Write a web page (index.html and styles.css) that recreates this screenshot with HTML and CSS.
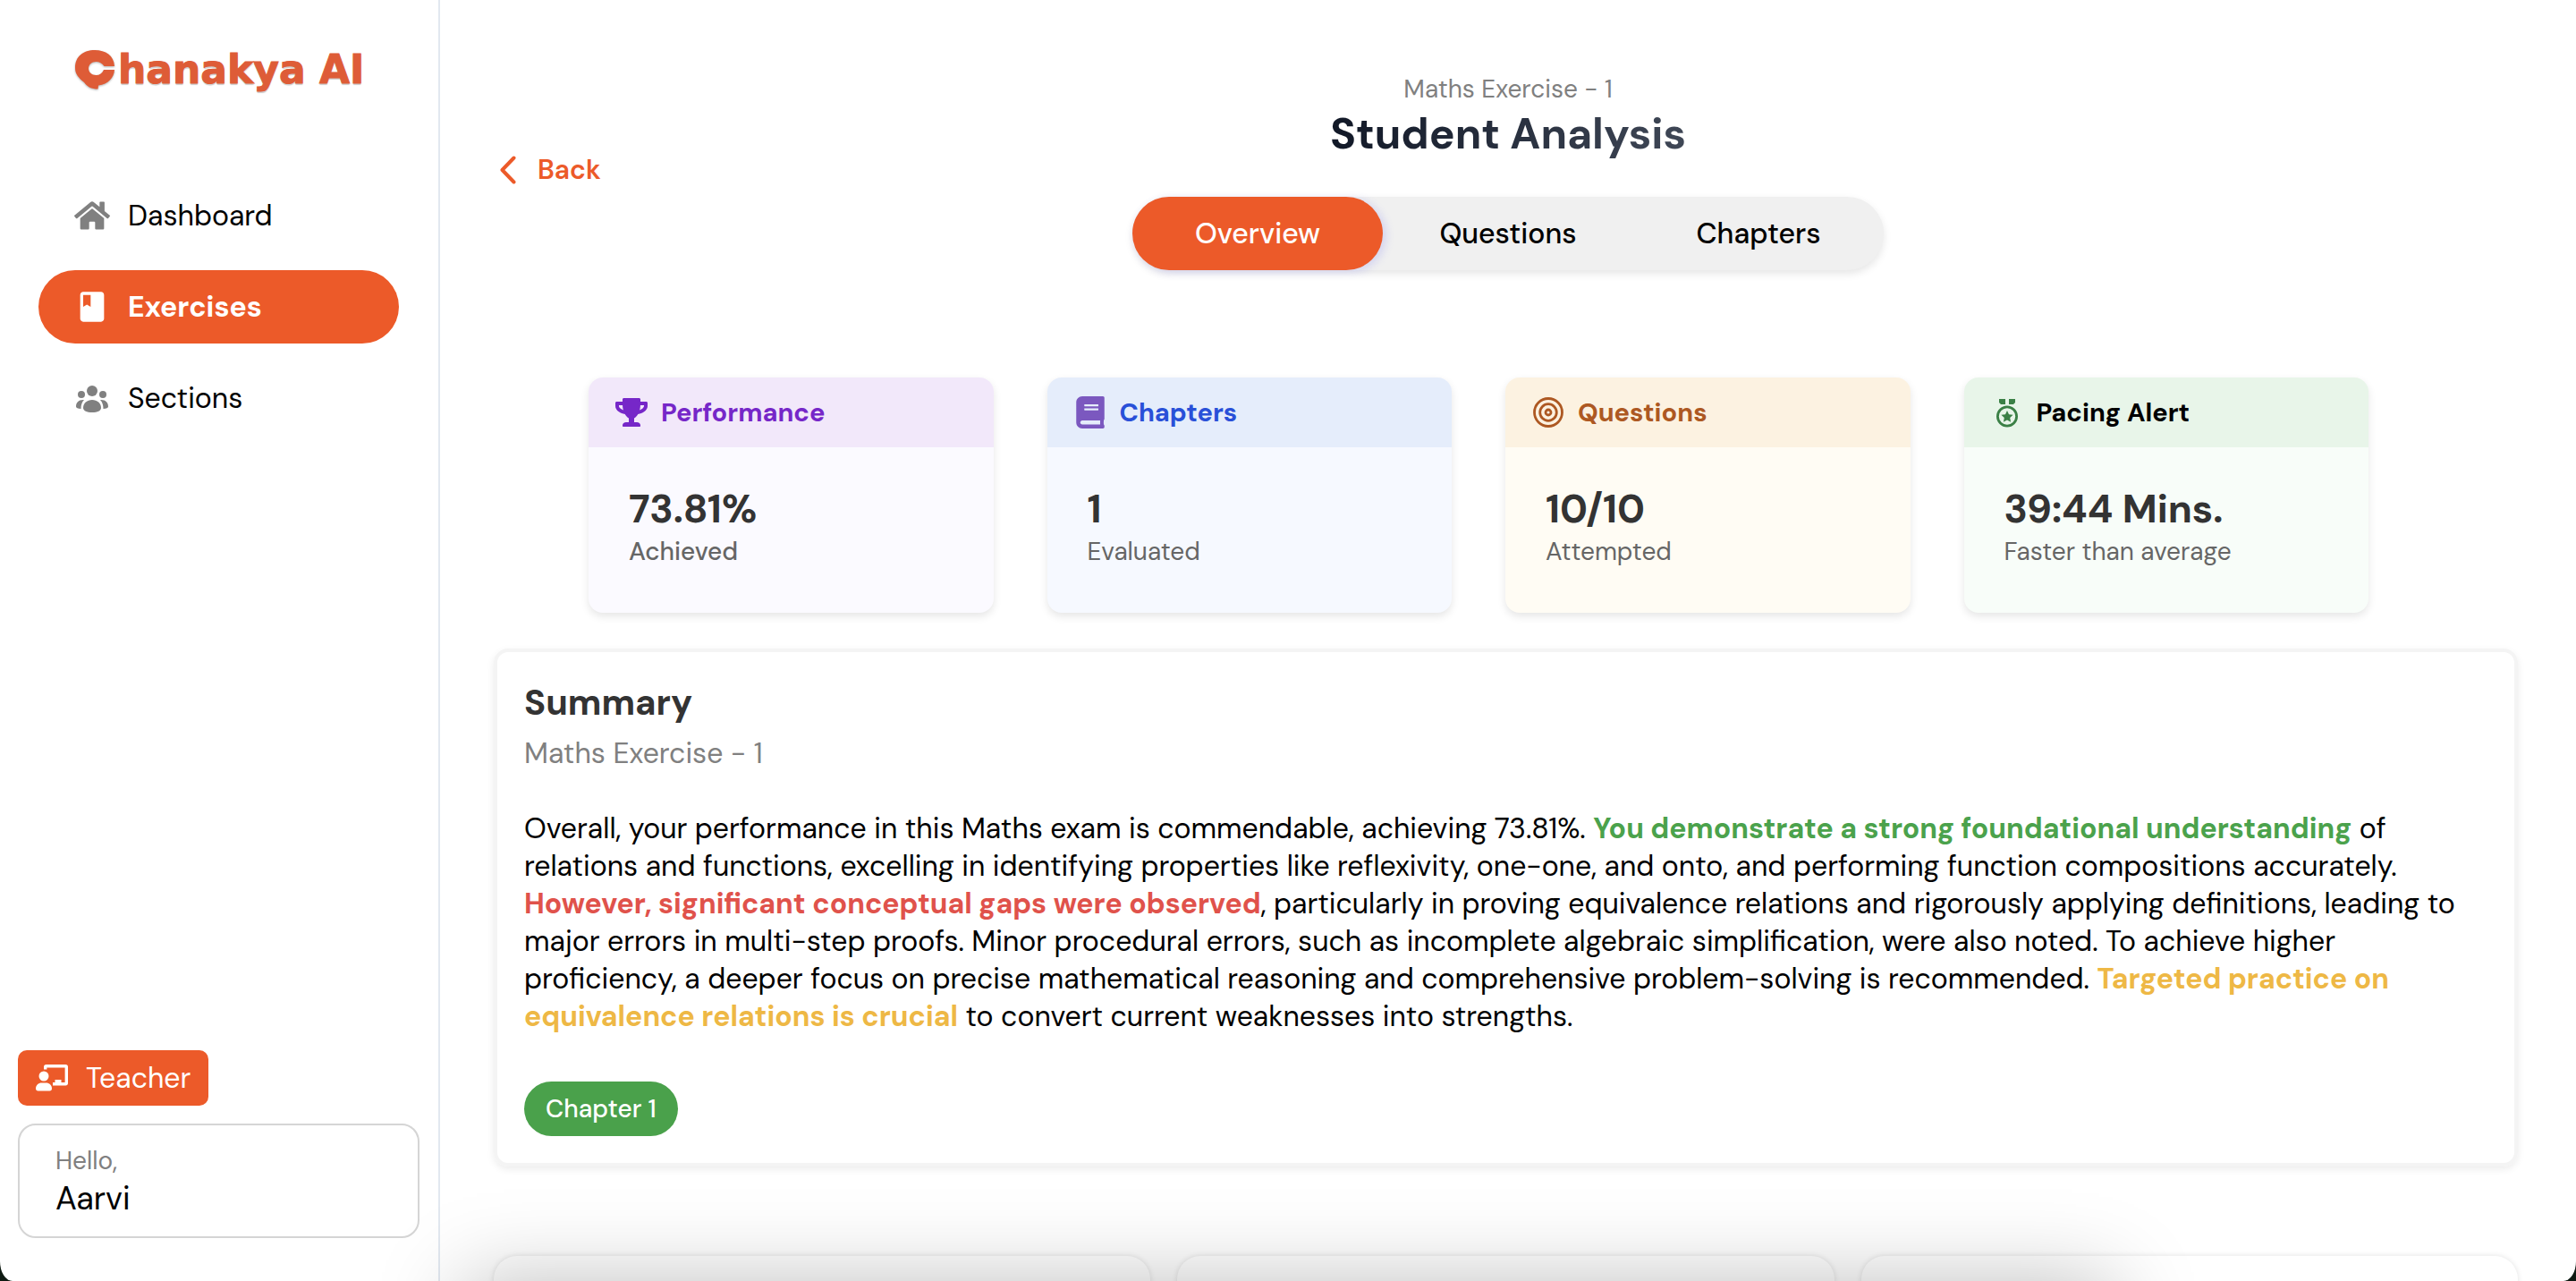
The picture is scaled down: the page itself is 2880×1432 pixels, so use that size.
FILE: index.html
```
<!DOCTYPE html>
<html lang="en">
<head>
<meta charset="utf-8">
<title>Student Analysis</title>
<link rel="stylesheet" href="styles.css">
</head>
<body>
<div class="app">
  <aside class="sidebar">
    <a class="logo" href="#" aria-label="Chanakya AI">
      <svg class="logo-mark" viewBox="0 0 44 44" aria-hidden="true"><path fill="currentColor" d="M44 18H32.5C30 14.500 27 13 23.500 13C18.500 13 15 16.500 15 20.500S18.500 28 23.500 28C27.500 28 30 26 32 22H44C43.500 31 37 38 26 39.500L25.500 43.500C18 43.500 13.500 41 10 36C4 31 0 27 0 20C0 7 9 0 22 0C34 0 43.500 6 44 18Z"/></svg>
      <span class="logo-text">hanakya AI</span>
    </a>
    <nav class="nav">
      <a class="nav-item" href="#">
        <svg class="nav-icon" viewBox="0 0 576 512" aria-hidden="true"><path fill="currentColor" d="M280.37 148.26L96 300.11V464a16 16 0 0 0 16 16l112.06-.29a16 16 0 0 0 15.92-16V368a16 16 0 0 1 16-16h64a16 16 0 0 1 16 16v95.64a16 16 0 0 0 16 16.05L464 480a16 16 0 0 0 16-16V300L295.67 148.26a12.19 12.19 0 0 0-15.3 0zM571.6 251.47L488 182.56V44.05a12 12 0 0 0-12-12h-56a12 12 0 0 0-12 12v72.61L318.47 43a48 48 0 0 0-61 0L4.34 251.47a12 12 0 0 0-1.600 16.900l25.500 31A12 12 0 0 0 45.150 301l235.220-193.740a12.190 12.190 0 0 1 15.300 0L530.900 301a12 12 0 0 0 16.900-1.600l25.500-31a12 12 0 0 0-1.700-16.930z"/></svg>
        Dashboard
      </a>
      <a class="nav-item active" href="#" aria-current="page">
        <svg class="nav-icon" viewBox="0 0 24 24" aria-hidden="true"><path fill="currentColor" d="M18 2H6c-1.100 0-2 .9-2 2v16c0 1.100.9 2 2 2h12c1.100 0 2-.9 2-2V4c0-1.100-.9-2-2-2zM6 4h5v8l-2.500-1.500L6 12V4z"/></svg>
        Exercises
      </a>
      <a class="nav-item" href="#">
        <svg class="nav-icon" viewBox="0 0 40 40" aria-hidden="true"><g fill="currentColor"><circle cx="20" cy="12" r="6"/><circle cx="8" cy="16" r="4"/><circle cx="32" cy="16" r="4"/><path d="M20 22c5.500 0 10 3.500 10 9 0 3-4 5-10 5s-10-2-10-5c0-5.500 4.500-9 10-9z"/><path d="M11 22C5 21.500 2 25 2 29.500 2 31 4 32 7.500 32c0-4 1-7.500 3.500-10z"/><path d="M29 22c6-.5 9 3 9 7.500 0 1.500-2 2.500-5.500 2.500 0-4-1-7.500-3.500-10z"/></g></svg>
        Sections
      </a>
    </nav>
    <div class="account">
      <button class="role" type="button">
        <svg class="role-icon" viewBox="0 0 36 30" aria-hidden="true"><g fill="currentColor"><circle cx="9" cy="13" r="5.500"/><path d="M0 27c0-4 3-6.500 6.500-6.500h5c3.500 0 6.500 2.500 6.500 6.500 0 1.500-1 2.500-2.500 2.500h-13C1 29.500 0 28.500 0 27z"/><path d="M21.500 22v-5h7v5z"/></g><path d="M10.700 5.500V2.700q0-1 1-1h21.600q1 0 1 1v18.100q0 1-1 1H19" fill="none" stroke="currentColor" stroke-width="3.400"/></svg>
        Teacher
      </button>
      <div class="user">
        <span class="user-hello">Hello,</span>
        <span class="user-name">Aarvi</span>
      </div>
    </div>
  </aside>

  <main class="main">
    <header class="header">
      <a class="back" href="#">
        <svg class="back-icon" viewBox="0 0 18 32" aria-hidden="true"><path d="M15.500 2.500L2.500 16l13 13.500" fill="none" stroke="currentColor" stroke-width="4" stroke-linecap="round" stroke-linejoin="round"/></svg>
        Back
      </a>
      <div class="heading">
        <p class="heading-sub">Maths Exercise - 1</p>
        <h1 class="heading-title">Student Analysis</h1>
        <div class="tabs" role="tablist">
          <button class="tab selected" type="button" role="tab" aria-selected="true">Overview</button>
          <button class="tab" type="button" role="tab" aria-selected="false">Questions</button>
          <button class="tab" type="button" role="tab" aria-selected="false">Chapters</button>
        </div>
      </div>
    </header>

    <div class="content">
      <section class="stats">
        <article class="stat purple">
          <h2 class="stat-head">
            <svg class="stat-icon" viewBox="0 0 576 512" aria-hidden="true"><path fill="currentColor" d="M552 64H448V24c0-13.300-10.700-24-24-24H152c-13.300 0-24 10.700-24 24v40H24C10.700 64 0 74.700 0 88v56c0 35.700 22.500 72.400 61.900 100.700 31.500 22.700 69.800 37.100 110 41.700C203.300 338.500 240 360 240 360v72h-48c-35.300 0-64 20.700-64 56v12c0 6.600 5.400 12 12 12h296c6.600 0 12-5.400 12-12v-12c0-35.300-28.700-56-64-56h-48v-72s36.700-21.500 68.100-73.600c40.300-4.600 78.600-19 110-41.700 39.300-28.300 61.900-65 61.900-100.700V88c0-13.300-10.700-24-24-24zM99.300 192.800C74.900 175.200 64 155.600 64 144v-16h64.200c1 32.600 5.800 61.200 12.800 86.200-15.100-5.200-29.200-12.400-41.700-21.400zM512 144c0 16.100-17.700 36.100-35.300 48.800-12.500 9-26.700 16.200-41.800 21.400 7-25 11.800-53.600 12.800-86.200H512v16z"/></svg>
            Performance
          </h2>
          <div class="stat-body">
            <p class="stat-value">73.81%</p>
            <p class="stat-label">Achieved</p>
          </div>
        </article>
        <article class="stat blue">
          <h2 class="stat-head">
            <svg class="stat-icon" viewBox="0 0 448 512" aria-hidden="true"><path fill="currentColor" d="M448 360V24c0-13.300-10.700-24-24-24H96C43 0 0 43 0 96v320c0 53 43 96 96 96h328c13.300 0 24-10.700 24-24v-16c0-7.500-3.500-14.300-8.900-18.700-4.200-15.400-4.200-59.300 0-74.700 5.400-4.300 8.900-11.100 8.900-18.600zM128 134c0-3.300 2.700-6 6-6h212c3.300 0 6 2.700 6 6v20c0 3.300-2.700 6-6 6H134c-3.300 0-6-2.700-6-6v-20zm0 64c0-3.300 2.700-6 6-6h212c3.300 0 6 2.700 6 6v20c0 3.300-2.700 6-6 6H134c-3.300 0-6-2.700-6-6v-20zm253.400 250H96c-17.700 0-32-14.300-32-32 0-17.600 14.400-32 32-32h285.400c-1.900 17.100-1.900 46.900 0 64z"/></svg>
            Chapters
          </h2>
          <div class="stat-body">
            <p class="stat-value">1</p>
            <p class="stat-label">Evaluated</p>
          </div>
        </article>
        <article class="stat amber">
          <h2 class="stat-head">
            <svg class="stat-icon" viewBox="0 0 36 36" aria-hidden="true"><g fill="none" stroke="currentColor" stroke-width="2.800"><circle cx="18" cy="18" r="15.500"/><circle cx="18" cy="18" r="9.300"/><circle cx="18" cy="18" r="3"/></g></svg>
            Questions
          </h2>
          <div class="stat-body">
            <p class="stat-value">10/10</p>
            <p class="stat-label">Attempted</p>
          </div>
        </article>
        <article class="stat green">
          <h2 class="stat-head">
            <svg class="stat-icon" viewBox="0 0 36 36" aria-hidden="true"><path fill="currentColor" d="M9 3h7v6h-5l-2-2zM20 3h7v4l-2 2h-5z"/><circle cx="18" cy="22.500" r="10.600" fill="none" stroke="currentColor" stroke-width="2.800"/><path fill="currentColor" d="M18 16l2 4.300 4.600.5-3.400 3.200.9 4.700-4.100-2.300-4.100 2.300.9-4.700-3.400-3.200 4.600-.5z"/></svg>
            Pacing Alert
          </h2>
          <div class="stat-body">
            <p class="stat-value">39:44 Mins.</p>
            <p class="stat-label">Faster than average</p>
          </div>
        </article>
      </section>

      <section class="summary">
        <h2 class="summary-title">Summary</h2>
        <p class="summary-sub">Maths Exercise - 1</p>
        <p class="summary-text">Overall, your performance in this Maths exam is commendable, achieving 73.81%. <strong class="good">You demonstrate a strong foundational understanding</strong> of relations and functions, excelling in identifying properties like reflexivity, one-one, and onto, and performing function compositions accurately. <strong class="bad">However, significant conceptual gaps were observed</strong>, particularly in proving equivalence relations and rigorously applying definitions, leading to major errors in multi-step proofs. Minor procedural errors, such as incomplete algebraic simplification, were also noted. To achieve higher proficiency, a deeper focus on precise mathematical reasoning and comprehensive problem-solving is recommended. <strong class="warn">Targeted practice on equivalence relations is crucial</strong> to convert current weaknesses into strengths.</p>
        <button class="chip" type="button">Chapter 1</button>
      </section>

      <section class="panels">
        <article class="panel"></article>
        <article class="panel"></article>
        <article class="panel"></article>
      </section>
    </div>
  </main>
  <div class="dock-shadow"></div>
</div>
</body>
</html>
```
FILE: styles.css
```
* {
  box-sizing: border-box;
}

body {
  margin: 0;
  background: #0e1a12;
  color: #000;
  font-family: "DM Sans", Inter, sans-serif;
  font-size: 32px;
  line-height: 42px;
}

h1,
h2,
p {
  margin: 0;
}

a {
  color: inherit;
  text-decoration: none;
}

button {
  border: 0;
  color: inherit;
  font: inherit;
  cursor: pointer;
}

svg {
  display: block;
  flex: none;
}

.app {
  position: relative;
  display: flex;
  height: 100vh;
  overflow: hidden;
  background: #fff;
  border-radius: 0 0 14px 14px / 0 0 22px 22px;
}

/* Sidebar */
.sidebar {
  display: flex;
  flex: none;
  flex-direction: column;
  width: 492px;
  padding: 56px 0 48px;
  border-right: 2px solid #e2e8f0;
}

.logo {
  display: flex;
  gap: 4px;
  margin-left: 84px;
  color: #de5c37;
}

.logo-mark {
  width: 44px;
  height: 44px;
  filter: drop-shadow(0 1px 1px rgba(0, 0, 0, 0.3));
}

.logo-text {
  font: bold 44px/44px "DejaVu Sans", sans-serif;
  -webkit-text-stroke: 1px currentColor;
  text-shadow: 0 2px 1px rgba(0, 0, 0, 0.2);
  white-space: nowrap;
}

.nav {
  display: flex;
  flex-direction: column;
  gap: 20px;
  margin: 100px 44px 0 43px;
}

.nav-item {
  display: flex;
  align-items: center;
  gap: 20px;
  padding: 20px 40px;
  border-radius: 41px;
}

.nav-icon {
  width: 40px;
  height: 40px;
  color: #808080;
}

.nav-item.active {
  background: #ec5a29;
  color: #fff;
  font-weight: 700;
}

.active .nav-icon {
  color: #fff;
}

.account {
  display: flex;
  flex-direction: column;
  align-items: flex-start;
  gap: 20px;
  margin-top: auto;
  padding: 0 21px 0 20px;
}

.role {
  display: flex;
  align-items: center;
  gap: 20px;
  padding: 10px 20px;
  border-radius: 10px;
  background: #ec5a29;
  color: #fff;
}

.role-icon {
  width: 36px;
  height: 30px;
}

.user {
  display: flex;
  flex-direction: column;
  align-self: stretch;
  padding: 22px 40px 18px;
  border: 2px solid #d5d5d5;
  border-radius: 20px;
}

.user-hello {
  color: #808080;
  font-size: 28px;
  line-height: 36px;
}

.user-name {
  font-size: 36px;
  line-height: 48px;
}

/* Page header */
.main {
  flex: 1;
  min-width: 0;
  padding: 82px 60px 60px;
  overflow-y: auto;
  scrollbar-width: none;
}

.header {
  display: grid;
  grid-template-columns: 1fr auto 1fr;
  align-items: center;
}

.back {
  display: flex;
  align-items: center;
  gap: 24px;
  justify-self: start;
  padding: 0 0 4px 7px;
  color: #ec5a29;
  font-size: 30px;
  font-weight: 600;
}

.back-icon {
  width: 18px;
  height: 32px;
}

.heading {
  display: flex;
  flex-direction: column;
  align-items: center;
}

.heading-sub {
  color: #808080;
  font-size: 28px;
  line-height: 36px;
}

.heading-title {
  background: linear-gradient(to right, #111827, #3f4756);
  background-clip: text;
  color: transparent;
  font-size: 48px;
  font-weight: 700;
  line-height: 64px;
}

.tabs {
  display: grid;
  grid-template-columns: repeat(3, 280px);
  margin-top: 38px;
  border-radius: 41px;
  background: #f0f0f0;
  box-shadow: 0 4px 10px rgba(0, 0, 0, 0.1);
}

.tab {
  padding: 20px;
  border-radius: 41px;
  background: transparent;
  font-weight: 500;
}

.tab.selected {
  background: #ec5a29;
  box-shadow: 4px 2px 10px rgba(99, 102, 241, 0.2);
  color: #fff;
}

/* Stat cards */
.content {
  padding: 120px 5px 0 0;
}

.stats {
  display: grid;
  grid-template-columns: repeat(4, 1fr);
  gap: 60px;
  padding: 0 167px 0 106px;
}

.stat {
  overflow: hidden;
  border-radius: 16px;
  background: var(--body);
  box-shadow: 0 4px 10px rgba(0, 0, 0, 0.1);
}

.stat-head {
  display: flex;
  align-items: center;
  gap: 15px;
  padding: 20px 30px;
  background: var(--head);
  color: var(--title);
  font-size: 29px;
  font-weight: 700;
  line-height: 38px;
}

.stat-icon {
  width: 36px;
  height: 36px;
  color: var(--icon);
}

.stat-body {
  padding: 40px 45px 49px;
}

.stat-value {
  color: #333;
  font-size: 44px;
  font-weight: 700;
  line-height: 58px;
}

.stat-label {
  color: #666;
  font-size: 28px;
  line-height: 38px;
}

.purple {
  --head: #f2e8fa;
  --body: #fbfaff;
  --title: #7627c8;
  --icon: #7627c8;
}

.purple .stat-label {
  font-weight: 500;
}

.blue {
  --head: #e5edfb;
  --body: #f6f9ff;
  --title: #2950d8;
  --icon: #7b58bf;
}

.amber {
  --head: #fcf2e1;
  --body: #fffcf4;
  --title: #ad5822;
  --icon: #ad5822;
}

.green {
  --head: #e8f5e9;
  --body: #f8fdf9;
  --title: #000;
  --icon: #3b8046;
}

/* Summary */
.summary {
  margin-top: 40px;
  padding: 30px;
  border: 4px solid #f4f4f4;
  border-radius: 16px;
  box-shadow: 0 3px 8px rgba(0, 0, 0, 0.08);
}

.summary-title {
  color: #333;
  font-size: 40px;
  font-weight: 700;
  line-height: 52px;
}

.summary-sub {
  margin-top: 10px;
  color: #808080;
}

.summary-text {
  margin-top: 42px;
}

.good {
  color: #4ba24c;
}

.bad {
  color: #e0524b;
}

.warn {
  color: #eeb845;
}

.chip {
  display: block;
  height: 61px;
  margin-top: 52px;
  padding: 0 24px;
  border-radius: 31px;
  background: #4aa14b;
  color: #fff;
  font-size: 28px;
  font-weight: 500;
}

/* Panels below the summary */
.panels {
  display: grid;
  grid-template-columns: repeat(3, 1fr);
  gap: 30px;
  margin-top: 100px;
}

.panel {
  min-height: 400px;
  border-radius: 26px;
  box-shadow: 0 0 6px rgba(0, 0, 0, 0.12);
}

/* Soft shade rising from the bottom edge */
.dock-shadow {
  position: absolute;
  top: 100%;
  right: 18%;
  left: 18%;
  height: 300px;
  box-shadow: 0 0 90px rgba(0, 0, 0, 0.25);
  pointer-events: none;
}
```
